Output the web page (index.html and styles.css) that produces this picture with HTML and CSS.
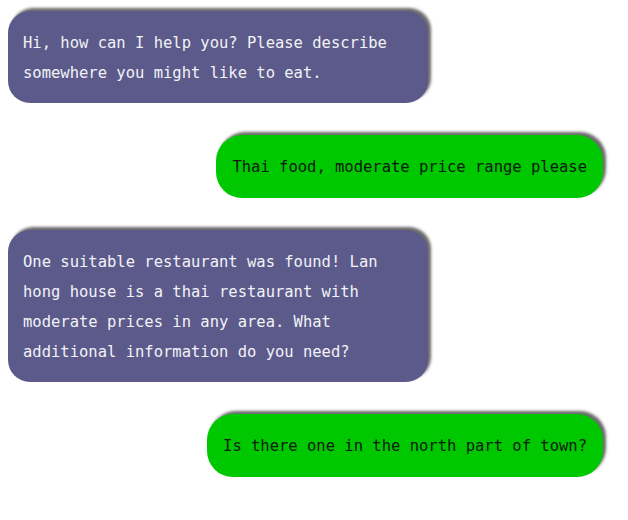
FILE: index.html
```html
<!DOCTYPE html>
<html>
<head>
<meta charset="utf-8">
<link rel="stylesheet" href="styles.css">
</head>
<body>
<div class="chat">
  <div class="msg bot">Hi, how can I help you? Please describe somewhere you might like to eat.</div>
  <div class="msg user">Thai food, moderate price range please</div>
  <div class="msg bot">One suitable restaurant was found! Lan hong house is a thai restaurant with moderate prices in any area. What additional information do you need?</div>
  <div class="msg user">Is there one in the north part of town?</div>
</div>
</body>
</html>
```
FILE: styles.css
```css
html, body {
  margin: 0;
  background: #ffffff;
}
.chat {
  display: flex;
  flex-direction: column;
  gap: 32px;
  padding: 11px 25px 0 8px;
  font-family: "DejaVu Sans Mono", "Liberation Mono", monospace;
  font-size: 15.5px;
  line-height: 30px;
}
.msg {
  box-sizing: border-box;
  max-width: 420px;
  padding: 17px 15px 15px;
  border-radius: 22px;
  box-shadow: 3px -3px 3px #6a6a6a;
}
.bot {
  align-self: flex-start;
  width: 420px;
  background: #5b5a8b;
  color: #f2f2f6;
}
.user {
  align-self: flex-end;
  background: #00c800;
  color: #0c1a0c;
  padding: 17px 16px 16px;
  border-radius: 26px;
}
```
